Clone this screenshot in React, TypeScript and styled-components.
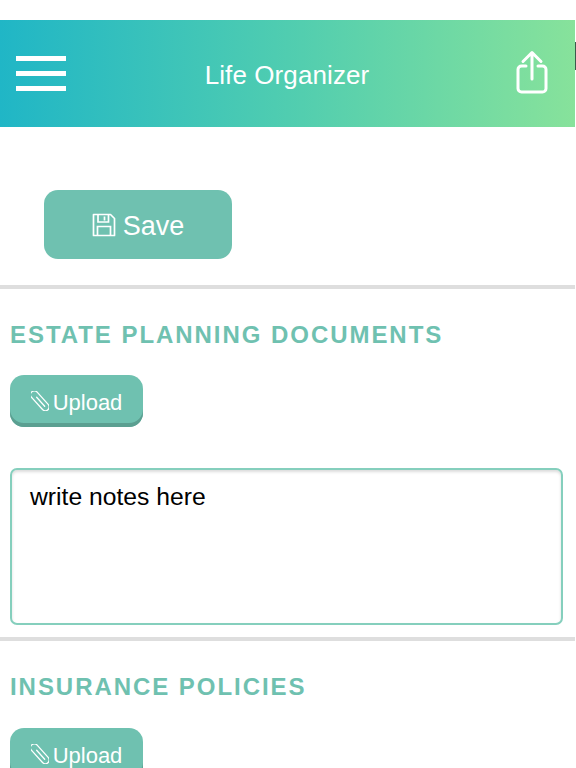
import React from 'react';
import styled, {createGlobalStyle} from 'styled-components';

const GlobalStyle = createGlobalStyle`
  html, body { margin: 0; padding: 0; background: white; }
  body { font-family: "Liberation Sans", Arial, sans-serif; overflow: hidden; }
  * { box-sizing: border-box; }
`;

const Page = styled.div`
  width: 576px;
  height: 768px;
  overflow: hidden;
  padding: 20px 1px 0 0;
  position: relative;
`;

const Header = styled.header`
  height: 107px;
  background: linear-gradient(90deg, #20b6c6 0%, #50cdb0 50%, #87e29b 100%);
  display: flex;
  align-items: center;
  justify-content: space-between;
  padding: 0 27px 0 16px;
  color: white;
`;

const Menu = styled.div`
  width: 50px;
  display: flex;
  flex-direction: column;
  gap: 10px;
  > span { height: 5px; background: white; }
`;

const Title = styled.h1`
  margin: 3px 0 0 -8px;
  font-size: 26px;
  font-weight: 400;
  letter-spacing: 0.1px;
`;

const ShareWrap = styled.div`
  display: flex;
  margin-top: -4px;
`;

const EdgeMark = styled.div`
  position: absolute;
  right: 0;
  top: 42px;
  width: 1px;
  height: 28px;
  background: #3c5a4c;
`;

const SaveRow = styled.div`
  height: 158px;
  padding: 63px 0 0 44px;
`;

const SaveButton = styled.button`
  width: 188px;
  height: 69px;
  border: none;
  border-radius: 14px;
  background: #6fc1b0;
  color: white;
  font-family: inherit;
  font-size: 27px;
  display: flex;
  align-items: center;
  justify-content: center;
  gap: 7px;
  padding: 0;
`;

const ButtonLabel = styled.span`
  margin-top: 4px;
`;

const Divider = styled.hr`
  height: 4px;
  margin: 0;
  border: none;
  background: #dedede;
`;

const Section = styled.section<{$height?: number}>`
  padding: 31px 10px 0;
  height: ${p => p.$height ?? 348}px;
`;

const Heading = styled.h2`
  margin: 0;
  font-size: 24px;
  line-height: 30px;
  font-weight: 700;
  letter-spacing: 1.95px;
  color: #6fc1b0;
`;

const UploadButton = styled.button<{$top?: number}>`
  margin-top: ${p => p.$top ?? 25}px;
  width: 133px;
  height: 52px;
  border: none;
  border-radius: 14px;
  background: #6fc1b0;
  box-shadow: inset 0 -4px 0 #5b9f91;
  color: white;
  font-family: inherit;
  font-size: 22px;
  display: flex;
  align-items: center;
  justify-content: center;
  gap: 4px;
  padding: 0;
`;

const Notes = styled.div`
  margin-top: 41px;
  height: 157px;
  width: 553px;
  border: 2px solid #85cfbd;
  border-radius: 7px;
  box-shadow: inset 0 2px 3px #dcdcdc;
  padding: 12px 18px;
  font-size: 24.7px;
  line-height: 30px;
  color: black;
`;

const FloppyIcon = () => (
    <svg width="24" height="24" viewBox="0 0 24 24" fill="none" stroke="white" strokeWidth="1.7">
        <path d="M1.5 1.5h17l4 4v17h-21z" strokeLinejoin="round"/>
        <path d="M6 2v7h10.500V2M12.500 3.500v4M5.500 22.500v-9h13v9"/>
    </svg>
);

const ClipIcon = () => (
    <svg width="18" height="20" viewBox="0 0 18 20" fill="none" stroke="white" strokeWidth="1.3" strokeLinecap="round">
        <g transform="rotate(-42 9 10)">
            <path d="M9 5V17M5.200 3V18a3.800 3.800 0 0 0 7.600 0V1.500a3.800 3.800 0 0 0-7.600 0V3"/>
        </g>
    </svg>
);

const ShareIcon = () => (
    <svg width="32" height="44" viewBox="0 0 32 44" fill="none" stroke="white" strokeWidth="3" strokeLinecap="round" strokeLinejoin="round">
        <path d="M16 29V3M7 11.500L16 2.500l9 9"/>
        <path d="M10 16H5.500a3.500 3.500 0 0 0-3.500 3.500V38.500A3.500 3.500 0 0 0 5.500 42h21a3.500 3.500 0 0 0 3.500-3.500V19.500A3.500 3.500 0 0 0 26.500 16H22"/>
    </svg>
);

function App() {
    return (
        <Page>
            <GlobalStyle/>
            <Header>
                <Menu><span/><span/><span/></Menu>
                <Title>Life Organizer</Title>
                <ShareWrap><ShareIcon/></ShareWrap>
            </Header>
            <EdgeMark/>
            <SaveRow>
                <SaveButton><FloppyIcon/><ButtonLabel>Save</ButtonLabel></SaveButton>
            </SaveRow>
            <Divider/>
            <Section>
                <Heading>ESTATE PLANNING DOCUMENTS</Heading>
                <UploadButton><ClipIcon/><ButtonLabel>Upload</ButtonLabel></UploadButton>
                <Notes>write notes here</Notes>
            </Section>
            <Divider/>
            <Section $height={130}>
                <Heading>INSURANCE POLICIES</Heading>
                <UploadButton $top={26}><ClipIcon/><ButtonLabel>Upload</ButtonLabel></UploadButton>
            </Section>
        </Page>
    );
}

export default App;
